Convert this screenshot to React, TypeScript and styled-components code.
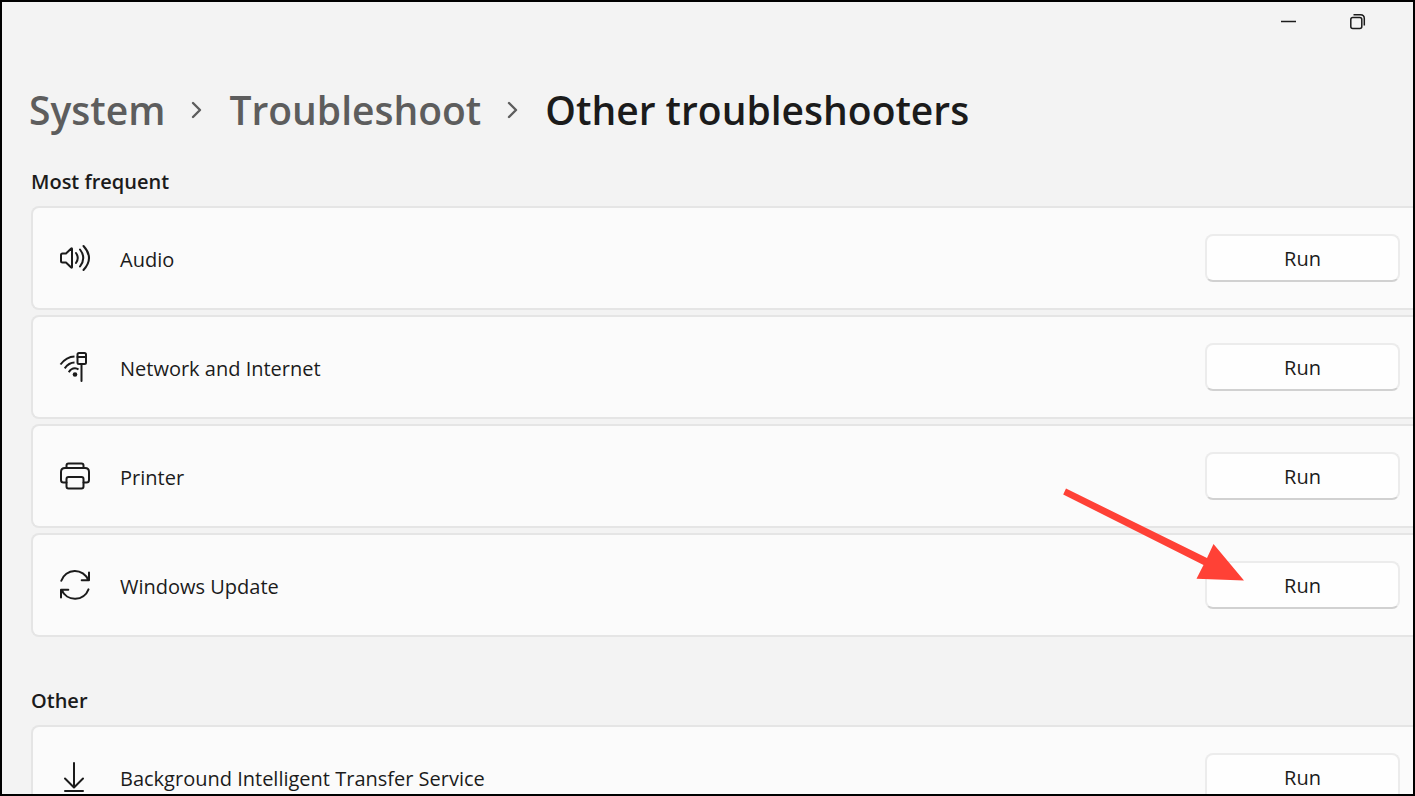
import React from "react";
import styled, { createGlobalStyle } from "styled-components";

const GlobalStyle = createGlobalStyle`
  *, *::before, *::after { box-sizing: border-box; }
  body {
    margin: 0;
    background: #f3f3f3;
    color: #1b1b1b;
    font-family: "Open Sans", "Noto Sans", sans-serif;
  }
`;

const Window = styled.div`
  display: flex;
  flex-direction: column;
  height: 100vh;
  overflow: hidden;
  border: 2px solid #000;
  background: #f3f3f3;
`;

const TitleBar = styled.header`
  display: flex;
  flex-shrink: 0;
  justify-content: flex-end;
  height: 40px;
  padding-right: 21px;
`;

const CaptionButton = styled.button`
  display: flex;
  align-items: center;
  justify-content: center;
  width: 69px;
  padding: 0;
  border: 0;
  background: transparent;
  color: #1b1b1b;
`;

const Page = styled.main`
  display: flex;
  flex-direction: column;
  flex-shrink: 0;
  padding-left: 29px;
`;

const Breadcrumb = styled.nav`
  display: flex;
  align-items: center;
  gap: 26px;
  height: 56px;
  margin-top: 40px;
  margin-left: -2px;
  font-size: 39px;
  font-weight: 600;
  line-height: 56px;
  color: #5d5d5d;
  white-space: nowrap;
`;

const Crumb = styled.a`
  color: inherit;
  text-decoration: none;
`;

const CurrentCrumb = styled.h1`
  margin: 0;
  color: #1b1b1b;
  font-size: inherit;
  font-weight: inherit;
`;

const Section = styled.section`
  padding-top: 28px;
  & + & {
    padding-top: 48px;
  }
`;

const SectionTitle = styled.h2`
  margin: 0 0 8px;
  font-size: 20px;
  font-weight: 600;
  line-height: 32px;
`;

const List = styled.ul`
  display: flex;
  flex-direction: column;
  gap: 5px;
  margin: 0;
  padding: 0;
  list-style: none;
`;

const Row = styled.li`
  display: flex;
  align-items: center;
  height: 104px;
  padding: 0 13px 0 26px;
  border: 2px solid #e5e5e5;
  border-right: 0;
  border-radius: 8px 0 0 8px;
  background: #fbfbfb;
`;

const RowLabel = styled.span`
  flex: 1;
  margin-left: 29px;
  padding-top: 4px;
  font-size: 20px;
  line-height: 28px;
`;

const Action = styled.div`
  position: relative;
`;

const RunButton = styled.button`
  display: block;
  width: 195px;
  height: 48px;
  padding: 2px 0 0;
  border: 2px solid #ececec;
  border-bottom-color: #d1d1d1;
  border-radius: 8px;
  background: #fefefe;
  color: #1b1b1b;
  font-family: inherit;
  font-size: 20px;
  line-height: 28px;
`;

const Pointer = styled.svg`
  position: absolute;
  top: -75px;
  left: -143px;
  pointer-events: none;
`;

const Glyph = ({ children }: { children: React.ReactNode }) => (
  <svg width="32" height="32" viewBox="0 0 32 32" fill="none" stroke="#1b1b1b"
    strokeWidth="2" strokeLinecap="round" strokeLinejoin="round" aria-hidden="true">
    {children}
  </svg>
);

const AudioIcon = () => (
  <Glyph>
    <path d="M3.5 11.5H7L12.2 6.6Q13 6 13 7V25Q13 26 12.2 25.4L7 20.5H3.5Q2 20.5 2 19V13Q2 11.5 3.5 11.5Z" />
    <path d="M17 11Q20.500 16 17 21M21 7.500Q27.500 16 21 24.500M24.500 4Q35.500 16 24.500 28" />
  </Glyph>
);

const NetworkIcon = () => (
  <Glyph>
    <path d="M1.500 13.500Q7.500 5.800 15.500 5.600M5.700 17.300Q9.800 11.600 15.500 11.500M9.800 21.200Q12 17.200 16 17.200Q18 17.200 19.500 18.500" strokeLinecap="butt" />
    <circle cx="16" cy="23.500" r="2.300" fill="#1b1b1b" stroke="none" />
    <rect x="18.500" y="2" width="8.500" height="11" rx="1.500" />
    <path d="M18.500 6H27M22.500 13V30" />
  </Glyph>
);

const PrinterIcon = () => (
  <Glyph>
    <path d="M7.500 7.500V5.500Q7.500 3.500 9.500 3.500H22.500Q24.500 3.500 24.500 5.500V7.500" />
    <path d="M7.500 22.500H4.500Q2 22.500 2 20V12Q2 8 6 8H26Q30 8 30 12V20Q30 22.500 27.500 22.500H24.500" />
    <rect x="7.500" y="17" width="17" height="11.500" rx="2" />
  </Glyph>
);

const UpdateIcon = () => (
  <Glyph>
    <path d="M2.300 11.700A14.400 14.400 0 0 1 29.300 11M30 3.500V11.300H22.700" />
    <path d="M29.500 20.400A14.400 14.400 0 0 1 2.700 21M2 28.500V20.700H9.300" />
  </Glyph>
);

const DownloadIcon = () => (
  <Glyph>
    <path d="M15 2V26M6 17.500L15 26.500L24 17.500M6 30H24" />
  </Glyph>
);

const ChevronIcon = () => (
  <svg width="12" height="20" viewBox="0 0 12 20" fill="none" stroke="#5d5d5d"
    strokeWidth="2.400" strokeLinecap="round" strokeLinejoin="round" aria-hidden="true">
    <path d="M2 3L9 10L2 17" />
  </svg>
);

const PointerArrow = () => (
  <Pointer width="184" height="98" viewBox="0 0 184 98" aria-hidden="true">
    <path d="M4 2.500L145 72L151.500 58L182 94.500L134.500 92.700L141.500 79L1.200 8.500Z" fill="#ff4136" />
  </Pointer>
);

type Item = { label: string; icon: React.ReactNode; highlighted?: boolean };

const sections: { title: string; items: Item[] }[] = [
  {
    title: "Most frequent",
    items: [
      { label: "Audio", icon: <AudioIcon /> },
      { label: "Network and Internet", icon: <NetworkIcon /> },
      { label: "Printer", icon: <PrinterIcon /> },
      { label: "Windows Update", icon: <UpdateIcon />, highlighted: true },
    ],
  },
  {
    title: "Other",
    items: [{ label: "Background Intelligent Transfer Service", icon: <DownloadIcon /> }],
  },
];

export default function App() {
  return (
    <Window>
      <GlobalStyle />
      <TitleBar>
        <CaptionButton aria-label="Minimize">
          <svg width="16" height="16" viewBox="0 0 16 16" stroke="currentColor" strokeWidth="1.500">
            <path d="M0 7.500H15" />
          </svg>
        </CaptionButton>
        <CaptionButton aria-label="Restore">
          <svg width="16" height="16" viewBox="0 0 16 16" fill="none" stroke="currentColor" strokeWidth="1.500">
            <rect x="0.800" y="3.500" width="11" height="11" rx="2" />
            <path d="M3.500 0.800H10.500Q14.300 0.800 14.300 4.600V11.500" />
          </svg>
        </CaptionButton>
      </TitleBar>
      <Page>
        <Breadcrumb aria-label="Breadcrumb">
          <Crumb href="#system">System</Crumb>
          <ChevronIcon />
          <Crumb href="#troubleshoot">Troubleshoot</Crumb>
          <ChevronIcon />
          <CurrentCrumb>Other troubleshooters</CurrentCrumb>
        </Breadcrumb>
        {sections.map((section) => (
          <Section key={section.title}>
            <SectionTitle>{section.title}</SectionTitle>
            <List>
              {section.items.map((item) => (
                <Row key={item.label}>
                  {item.icon}
                  <RowLabel>{item.label}</RowLabel>
                  <Action>
                    <RunButton aria-label={`Run ${item.label}`}>Run</RunButton>
                    {item.highlighted && <PointerArrow />}
                  </Action>
                </Row>
              ))}
            </List>
          </Section>
        ))}
      </Page>
    </Window>
  );
}
